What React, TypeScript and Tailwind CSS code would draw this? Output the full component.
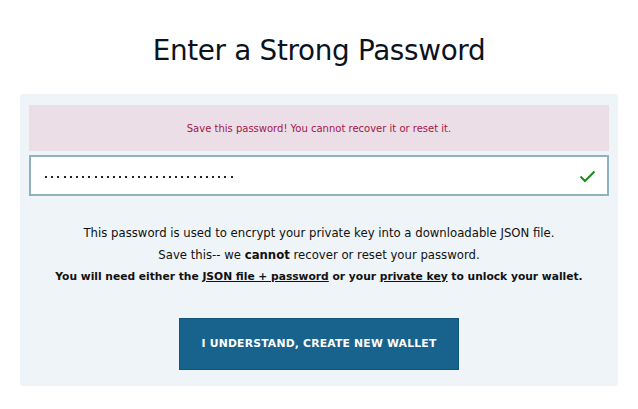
import React from "react";

export default function App() {
  const dots = Array.from({ length: 31 });
  return (
    <div className="w-[638px] h-[409px] bg-white overflow-hidden" style={{ fontFamily: '"DejaVu Sans", sans-serif' }}>
      <h1 className="h-[94px] flex items-center justify-center pt-[8px] text-[27.8px] text-[#0b1220] font-normal tracking-[-0.3px]">
        Enter a Strong Password
      </h1>
      <div className="mx-[20px] w-[598px] h-[292px] bg-[#eef4f7] rounded-[3px] pt-[11px] px-[9px]">
        <div className="h-[46px] bg-[#ecdee6] flex items-center justify-center text-[10px] text-[#a3174a]">
          Save this password! You cannot recover it or reset it.
        </div>
        <div className="mt-[4px] h-[41px] bg-white border-2 border-[#8fb2c1] flex items-center justify-between pl-[14px] pr-[11px]">
          <div className="flex gap-[4.2px] mt-[2px]">
            {dots.map((_, i) => (
              <span key={i} className="block w-[2px] h-[2px] bg-[#222]" />
            ))}
          </div>
          <svg width="17" height="13" viewBox="0 0 17 13" className="mt-[2px]">
            <path d="M1.5 6.5 L6 11 L15.5 1.5" fill="none" stroke="#1e8a1e" strokeWidth="2" />
          </svg>
        </div>
        <div className="mt-[26px] flex flex-col items-center text-[11.7px] text-[#111] leading-[22px] whitespace-nowrap">
          <p>This password is used to encrypt your private key into a downloadable JSON file.</p>
          <p>
            Save this-- we <b>cannot</b> recover or reset your password.
          </p>
          <p className="font-bold text-[10.7px]">
            You will need either the <span className="underline">JSON file + password</span> or your{" "}
            <span className="underline">private key</span> to unlock your wallet.
          </p>
        </div>
        <div className="mt-[30px] flex justify-center">
          <button className="w-[280px] h-[52px] bg-[#17638d] border border-[#12557a] text-white text-[10.8px] font-bold tracking-[0.2px]">
            I UNDERSTAND, CREATE NEW WALLET
          </button>
        </div>
      </div>
    </div>
  );
}
